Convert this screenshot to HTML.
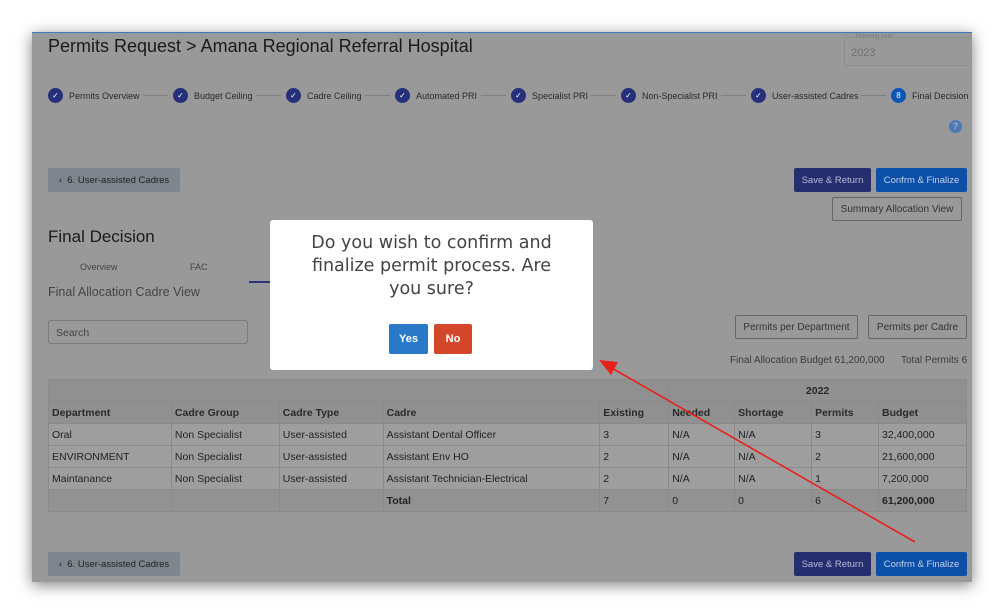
<!DOCTYPE html>
<html><head><meta charset="utf-8"><style>
*{box-sizing:border-box;margin:0;padding:0}
body{width:1004px;height:614px;background:#fff;font-family:"Liberation Sans",sans-serif;position:relative;overflow:hidden}
.page{position:absolute;left:32px;top:32px;width:940px;height:550px;background:#999;box-shadow:0 3px 14px rgba(0,0,0,.5);border-top:1px solid #3a7bbf}
.a{position:absolute;white-space:nowrap}
.step{position:absolute;top:88px;font-size:9px;color:#2a2a2a;display:flex;align-items:center}
.dot{width:15px;height:15px;border-radius:50%;background:#26307a;color:#fff;font-size:8px;display:flex;align-items:center;justify-content:center;margin-right:6px}
.line{position:absolute;top:95px;height:1px;background:#7f7f7f}
.btn{position:absolute;font-size:9.5px;display:flex;align-items:center;justify-content:center;border-radius:2px}
.grey{background:#7e858c;color:#222}
.navy{background:#262e6e;color:#b8bcd8}
.blue{background:#0b4fa8;color:#c6d3ea}
.out{border:1px solid #666;color:#333;font-size:10px}
table{position:absolute;left:48px;top:379px;width:919px;border-collapse:collapse;font-size:10.5px;color:#222}
td{border:1px solid #8a8a8a;height:22px;padding:0 3px;background:#9e9e9e}
tr.h td{background:#909090;font-weight:bold;color:#2a2a2a}
tr.t td{background:#929292}
</style></head><body>
<div class="page"></div>
<div class="a" style="left:48px;top:36px;font-size:18px;color:#1a1a1a">Permits Request &gt; Amana Regional Referral Hospital</div>
<div class="a" style="left:844px;top:37px;width:128px;height:29px;border:1px solid #8e8e8e;border-right:none;border-radius:3px"></div>
<div class="a" style="left:854px;top:34px;font-size:6px;color:#777;background:#999;padding:0 2px">Planning year</div>
<div class="a" style="left:851px;top:47px;font-size:11px;color:#6f6f6f">2023</div>

<div class="step" style="left:48px"><span class="dot">✓</span>Permits Overview</div>
<div class="line" style="left:143px;width:25px"></div>
<div class="step" style="left:173px"><span class="dot">✓</span>Budget Ceiling</div>
<div class="line" style="left:256px;width:25px"></div>
<div class="step" style="left:286px"><span class="dot">✓</span>Cadre Ceiling</div>
<div class="line" style="left:365px;width:25px"></div>
<div class="step" style="left:395px"><span class="dot">✓</span>Automated PRI</div>
<div class="line" style="left:481px;width:25px"></div>
<div class="step" style="left:511px"><span class="dot">✓</span>Specialist PRI</div>
<div class="line" style="left:591px;width:25px"></div>
<div class="step" style="left:621px"><span class="dot">✓</span>Non-Specialist PRI</div>
<div class="line" style="left:721px;width:25px"></div>
<div class="step" style="left:751px"><span class="dot">✓</span>User-assisted Cadres</div>
<div class="line" style="left:861px;width:25px"></div>
<div class="step" style="left:891px"><span class="dot" style="background:#0b55b5">8</span>Final Decision</div>
<div class="a" style="left:949px;top:120px;width:13px;height:13px;border-radius:50%;background:#4a79b3;color:#aac;font-size:9px;font-weight:bold;text-align:center;line-height:13px">?</div>

<div class="btn grey" style="left:48px;top:168px;width:132px;height:24px">‹&nbsp;&nbsp;6. User-assisted Cadres</div>
<div class="btn navy" style="left:794px;top:168px;width:77px;height:24px">Save &amp; Return</div>
<div class="btn blue" style="left:876px;top:168px;width:91px;height:24px">Confrm &amp; Finalize</div>
<div class="btn out" style="left:832px;top:197px;width:130px;height:24px">Summary Allocation View</div>

<div class="a" style="left:48px;top:227px;font-size:17px;color:#1a1a1a">Final Decision</div>
<div class="a" style="left:80px;top:262px;font-size:9px;color:#444">Overview</div>
<div class="a" style="left:190px;top:262px;font-size:9px;color:#444">FAC</div>
<div class="a" style="left:249px;top:281px;width:22px;height:2px;background:#2d357a"></div>
<div class="a" style="left:48px;top:285px;font-size:12.5px;color:#444">Final Allocation Cadre View</div>
<div class="a" style="left:48px;top:320px;width:200px;height:24px;border:1px solid #7d7d7d;border-radius:3px;font-size:10.5px;color:#444;padding:6px 7px">Search</div>

<div class="btn out" style="left:735px;top:315px;width:123px;height:24px">Permits per Department</div>
<div class="btn out" style="left:868px;top:315px;width:99px;height:24px">Permits per Cadre</div>
<div class="a" style="left:730px;top:355px;font-size:10px;color:#3a3a3a">Final Allocation Budget 61,200,000</div>
<div class="a" style="left:901px;top:355px;font-size:10px;color:#3a3a3a">Total Permits 6</div>

<table>
<colgroup><col style="width:123px"><col style="width:108px"><col style="width:104px"><col style="width:217px"><col style="width:69px"><col style="width:66px"><col style="width:77px"><col style="width:67px"><col style="width:88px"></colgroup>
<tr class="h"><td colspan="5"></td><td colspan="4" style="text-align:center">2022</td></tr>
<tr class="h"><td>Department</td><td>Cadre Group</td><td>Cadre Type</td><td>Cadre</td><td>Existing</td><td>Needed</td><td>Shortage</td><td>Permits</td><td>Budget</td></tr>
<tr><td>Oral</td><td>Non Specialist</td><td>User-assisted</td><td>Assistant Dental Officer</td><td>3</td><td>N/A</td><td>N/A</td><td>3</td><td>32,400,000</td></tr>
<tr><td>ENVIRONMENT</td><td>Non Specialist</td><td>User-assisted</td><td>Assistant Env HO</td><td>2</td><td>N/A</td><td>N/A</td><td>2</td><td>21,600,000</td></tr>
<tr><td>Maintanance</td><td>Non Specialist</td><td>User-assisted</td><td>Assistant Technician-Electrical</td><td>2</td><td>N/A</td><td>N/A</td><td>1</td><td>7,200,000</td></tr>
<tr class="t"><td></td><td></td><td></td><td><b>Total</b></td><td>7</td><td>0</td><td>0</td><td>6</td><td><b>61,200,000</b></td></tr>
</table>

<div class="btn grey" style="left:48px;top:552px;width:132px;height:24px">‹&nbsp;&nbsp;6. User-assisted Cadres</div>
<div class="btn navy" style="left:794px;top:552px;width:77px;height:24px">Save &amp; Return</div>
<div class="btn blue" style="left:876px;top:552px;width:91px;height:24px">Confrm &amp; Finalize</div>

<div class="a" style="left:270px;top:220px;width:323px;height:150px;background:#fff;border-radius:3px"></div>
<div class="a" style="left:270px;top:232px;width:323px;text-align:center;white-space:normal;font-family:'DejaVu Sans','Liberation Sans',sans-serif;font-size:17.5px;line-height:23px;color:#444;padding:0 36px">Do you wish to confirm and finalize permit process. Are you sure?</div>
<div class="btn" style="left:389px;top:324px;width:39px;height:30px;background:#2979c8;color:#fff;font-weight:bold;font-size:11px">Yes</div>
<div class="btn" style="left:434px;top:324px;width:38px;height:30px;background:#d5472a;color:#fff;font-weight:bold;font-size:11px">No</div>

<svg class="a" style="left:0;top:0" width="1004" height="614"><line x1="915" y1="542" x2="610" y2="367" stroke="#e8211c" stroke-width="1.6"/><polygon points="599,360 618,362 611,375" fill="#e8211c"/></svg>
</body></html>
